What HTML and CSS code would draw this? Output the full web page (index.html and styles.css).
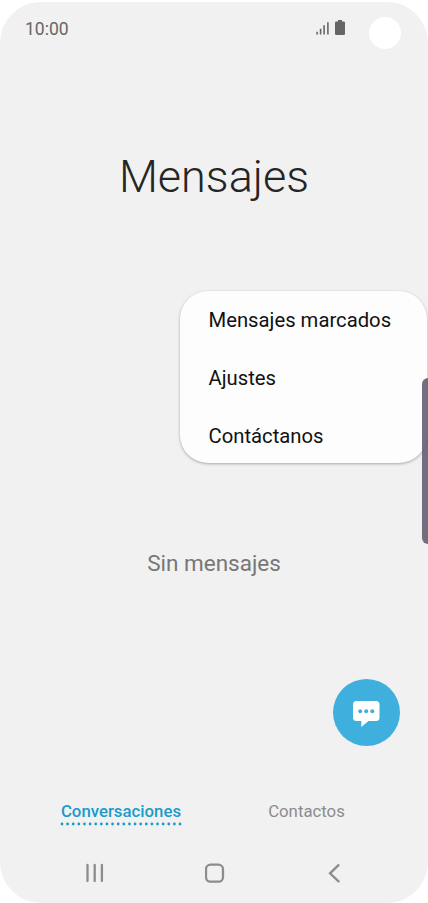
FILE: index.html
```html
<!DOCTYPE html>
<html lang="es">
<head>
    <meta charset="UTF-8">
    <meta name="viewport" content="width=device-width, initial-scale=1.0">
    <title>Mensajes</title>
    <link rel="stylesheet" href="styles.css">
</head>
<body>
    <div class="screen">
        <header class="status-bar">
            <span class="time">10:00</span>
            <svg class="signal" width="14" height="14" viewBox="0 0 14 14">
                <path d="M1.1 10.8V13.5M4.6 7.7V13.5M8.1 4.2V13.5M11.9 1.2V13.5"/>
            </svg>
            <svg class="battery" width="10" height="15" viewBox="0 0 10 15">
                <path d="M3 0h4v1.6h1.8a1.2 1.2 0 0 1 1.2 1.2v11a1.2 1.2 0 0 1-1.2 1.2H1.2a1.2 1.2 0 0 1-1.2-1.2v-11a1.2 1.2 0 0 1 1.2-1.2H3z"/>
            </svg>
            <span class="camera"></span>
        </header>

        <h1>Mensajes</h1>

        <main>
            <p class="empty">Sin mensajes</p>
            <button class="compose" aria-label="Nuevo mensaje">
                <svg width="28" height="28" viewBox="0 0 28 28">
                    <path class="bubble" d="M3.5 2h19.500a3.500 3.500 0 0 1 3.500 3.500v13a3.500 3.500 0 0 1-3.500 3.500H15.500l-7.200 6V22H3.500A3.500 3.500 0 0 1 0 18.500v-13A3.500 3.500 0 0 1 3.500 2z"/>
                    <circle cx="7.200" cy="12.300" r="2"/>
                    <circle cx="13.200" cy="12.300" r="2"/>
                    <circle cx="19.300" cy="12.300" r="2"/>
                </svg>
            </button>
        </main>

        <div class="tabs">
            <a class="tab active">Conversaciones
                <svg width="122" height="4" viewBox="0 0 122 4">
                    <path d="M2 2H120.500"/>
                </svg>
            </a>
            <a class="tab">Contactos</a>
        </div>

        <nav>
            <svg width="20" height="20" viewBox="0 0 20 20">
                <path d="M2.500 2V18M9.700 2V18M16.900 2V18"/>
            </svg>
            <svg width="20" height="20" viewBox="0 0 20 20">
                <rect x="1" y="1.700" width="17" height="17" rx="4.500"/>
            </svg>
            <svg width="20" height="20" viewBox="0 0 20 20">
                <path d="M13.500 2.200L5 10.300L13.500 18.400"/>
            </svg>
        </nav>

        <ul class="menu">
            <li>Mensajes marcados</li>
            <li>Ajustes</li>
            <li>Contáctanos</li>
        </ul>
        <div class="edge-handle"></div>
    </div>
</body>
</html>
```

FILE: styles.css
```css
* {
    box-sizing: border-box;
}
body {
    margin: 0;
    padding-top: 2px;
    background-color: #fff;
    font-family: Roboto, sans-serif;
}
.screen {
    position: relative;
    display: flex;
    flex-direction: column;
    height: 901px;
    background-color: #f1f1f1;
    border-radius: 41px;
    overflow: hidden;
}
svg {
    display: block;
}
.status-bar {
    display: flex;
    align-items: center;
    height: 54px;
    padding: 0 27px 0 25px;
}
.time {
    flex: 1;
    color: #666;
    font-size: 17.5px;
}
.signal {
    margin: -2px 5px 0 0;
    fill: none;
    stroke: #666;
    stroke-width: 1.6;
}
.battery {
    margin-top: -3px;
    fill: #666;
}
.camera {
    width: 32px;
    height: 32px;
    margin: 8px 0 0 24px;
    background-color: #fff;
    border-radius: 50%;
}
h1 {
    height: 60px;
    margin: 91px 0 0;
    color: #252525;
    font-size: 45px;
    font-weight: 300;
    line-height: 60px;
    text-align: center;
}
main {
    display: flex;
    flex-direction: column;
    flex: 1;
    padding: 341px 28px 0;
}
.empty {
    margin: 0;
    color: #777;
    font-size: 22.5px;
    line-height: 30px;
    text-align: center;
}
.compose {
    display: flex;
    align-items: center;
    justify-content: center;
    align-self: flex-end;
    width: 67px;
    height: 67px;
    margin-top: 101px;
    padding: 0;
    background-color: #3fb0dd;
    border: none;
    border-radius: 50%;
}
.compose circle {
    fill: #3fb0dd;
}
.bubble {
    fill: #fff;
}
.tabs {
    display: grid;
    grid-template-columns: 185px 185px;
    justify-content: center;
    height: 43px;
}
.tab {
    display: flex;
    flex-direction: column;
    align-items: center;
    color: #8c8c8c;
    font-size: 16.8px;
    line-height: 20px;
}
.tab.active {
    padding-right: 1px;
    color: #1b9bcb;
    font-weight: 500;
}
.tab svg {
    margin-top: 1px;
    fill: none;
    stroke: #1b9bcb;
    stroke-width: 2.8;
    stroke-linecap: round;
    stroke-dasharray: 0 5.62;
}
nav {
    display: flex;
    justify-content: center;
    gap: 100px;
    height: 59px;
    padding: 19px 0 0 2px;
}
nav svg {
    fill: none;
    stroke: #8c8c8c;
    stroke-width: 2.3;
    stroke-linecap: round;
}
.menu {
    position: absolute;
    top: 289px;
    right: 1px;
    width: 247px;
    height: 172px;
    margin: 0;
    padding: 1px 0 0 28.5px;
    background-color: #fdfdfd;
    border-radius: 28px;
    box-shadow: 0 1px 3px rgba(0, 0, 0, 0.3);
    list-style: none;
}
.menu li {
    color: #111;
    font-size: 20.25px;
    line-height: 57.8px;
}
.edge-handle {
    position: absolute;
    top: 376px;
    right: 0;
    width: 6px;
    height: 166px;
    background-color: rgba(94, 92, 110, 0.88);
    border-radius: 6px 0 0 6px;
}
```
